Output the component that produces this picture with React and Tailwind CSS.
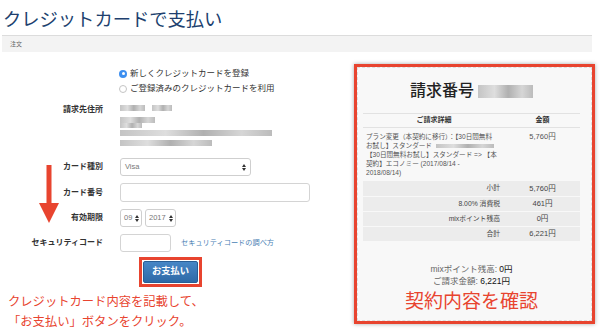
import React from "react";

function UpDown() {
  return (
    <svg width="4" height="7" viewBox="0 0 4 7" className="shrink-0">
      <polygon points="0,3 4,3 2,0" fill="#333" />
      <polygon points="0,4 4,4 2,7" fill="#333" />
    </svg>
  );
}

function Row({ label, children, className = "" }) {
  return (
    <div className={"flex items-center " + className}>
      <div className="w-[103px] shrink-0 text-right text-[8px] font-bold text-[#333]">
        {label}
      </div>
      <div className="ml-[17px] flex items-center">{children}</div>
    </div>
  );
}

function Mosaic({ className = "" }) {
  return (
    <div
      className={
        "bg-[linear-gradient(90deg,#c4c4c4,#dedede_30%,#b0b0b0_55%,#d6d6d6_80%,#bcbcbc)] blur-[0.6px] " +
        className
      }
    />
  );
}

const summary = [
  ["小計", "5,760円"],
  ["8.00% 消費税", "461円"],
  ["mixポイント残高", "0円"],
  ["合計", "6,221円"],
];

export default function App() {
  return (
    <div className="w-[600px] h-[330px] overflow-hidden bg-white text-[#333] font-['Liberation_Sans','Noto_Sans_CJK_JP',sans-serif]">
      {/* title */}
      <h1 className="h-[35px] pl-[3px] pt-[7px] text-[18.3px] leading-[26px] text-[#203f6e]">
        クレジットカードで支払い
      </h1>
      {/* breadcrumb */}
      <div className="mx-[2px] h-[17px] w-[590px] border-t border-[#dcdcdc] bg-[#f3f3f3] pl-[8px] text-[6px] leading-[16px] text-[#666]">
        注文
      </div>

      <div className="flex">
        {/* LEFT: form */}
        <div className="relative w-[354px] shrink-0 pt-[14px]">
          <div className="flex h-[15px] items-center pl-[119px] text-[8.5px]">
            <span className="flex h-[8px] w-[8px] items-center justify-center rounded-full bg-[#3d8ff0]">
              <span className="h-[3px] w-[3px] rounded-full bg-white" />
            </span>
            <span className="ml-[3px]">新しくクレジットカードを登録</span>
          </div>
          <div className="flex h-[15px] items-center pl-[119px] text-[8.5px]">
            <span className="h-[8px] w-[8px] rounded-full border border-[#c4c4c4] bg-white" />
            <span className="ml-[3px]">ご登録済みのクレジットカードを利用</span>
          </div>

          <div className="mt-[8px] flex items-start">
            <div className="w-[103px] shrink-0 text-right text-[8px] font-bold leading-[12px] text-[#333]">
              請求先住所
            </div>
            <div className="ml-[17px] flex h-[46px] flex-col pt-[1px]">
              <div className="flex gap-[7px]">
                <Mosaic className="h-[6px] w-[25px]" />
                <Mosaic className="h-[6px] w-[20px]" />
              </div>
              <Mosaic className="mt-[6px] h-[6px] w-[35px]" />
              <Mosaic className="h-[5px] w-[22px]" />
              <Mosaic className="mt-[2px] h-[6px] w-[152px]" />
              <Mosaic className="mt-[4px] h-[6px] w-[92px]" />
            </div>
          </div>

          <Row label="カード種別" className="mt-[8px]">
            <div className="flex h-[18px] w-[131px] items-center justify-between rounded-[3px] border border-[#cfcfcf] bg-white px-[4px] text-[7.5px] text-[#777]">
              <span>Visa</span>
              <UpDown />
            </div>
          </Row>

          <Row label="カード番号" className="mt-[7px]">
            <div className="h-[19px] w-[190px] rounded-[3px] border border-[#d4d4d4] bg-white" />
          </Row>

          <Row label="有効期限" className="mt-[7px]">
            <div className="flex gap-[3px] text-[7.5px] text-[#777]">
              <div className="flex h-[18px] w-[22px] items-center justify-between rounded-[3px] border border-[#cfcfcf] bg-white pl-[3px] pr-[2px]">
                <span>09</span>
                <UpDown />
              </div>
              <div className="flex h-[18px] w-[31px] items-center justify-between rounded-[3px] border border-[#cfcfcf] bg-white pl-[3px] pr-[2px]">
                <span>2017</span>
                <UpDown />
              </div>
            </div>
          </Row>

          <Row label="セキュリティコード" className="mt-[7px]">
            <div className="h-[18px] w-[51px] rounded-[3px] border border-[#d4d4d4] bg-white" />
            <span className="ml-[10px] text-[7.2px] text-[#4a7fb5]">
              セキュリティコードの調べ方
            </span>
          </Row>

          {/* pay button with red frame */}
          <div className="ml-[139px] mt-[5px] w-fit border-[3px] border-[#e8442f] p-[1px]">
            <button className="flex h-[22px] w-[55px] items-center justify-center rounded-[2px] border border-[#285e96] bg-[linear-gradient(#4686c6,#2f6aa7)] text-[9.3px] font-bold text-white">
              お支払い
            </button>
          </div>

          <p className="mt-[5px] pl-[8px] text-[12.3px] leading-[20px] text-[#e8442f]">
            クレジットカード内容を記載して、
            <br />
            「お支払い」ボタンをクリック。
          </p>

          {/* annotation arrow */}
          <svg
            width="20"
            height="60"
            viewBox="0 0 20 60"
            className="absolute left-[39px] top-[113px]"
          >
            <rect x="7.5" y="0" width="5" height="39" fill="#e8442f" />
            <polygon points="0,38 20,38 10,58" fill="#e8442f" />
          </svg>
        </div>

        {/* RIGHT: invoice */}
        <div className="mt-[12px] h-[260px] w-[241px] shrink-0 border-[3px] border-[#e8442f] shadow-[0_0_4px_rgba(0,0,0,0.35)]">
          <div className="h-full border border-dashed border-[#dedede] bg-[#f8f8f8]">
            <div className="ml-[5px] w-[217px]">
              <div className="flex items-center justify-center gap-[4px] pt-[13px] text-[16px] font-medium leading-[20px] text-[#222]">
                <span>請求番号</span>
                <Mosaic className="h-[13px] w-[55px]" />
              </div>

              <div className="mt-[12px] flex h-[15px] items-center border-y border-[#e2e2e2] text-[7px] font-bold">
                <div className="w-[142px] text-center">ご請求詳細</div>
                <div className="flex-1 text-center">金額</div>
              </div>

              <div className="flex h-[53px] pt-[4px] text-[6.6px] leading-[9px] text-[#555]">
                <div className="w-[142px] pl-[3px]">
                  プラン変更（本契約に移行）：【30日間無料
                  <br />
                  <span className="inline-flex items-center">
                    お試し】スタンダード
                    <Mosaic className="ml-[4px] h-[4px] w-[58px]" />
                  </span>
                  <br />
                  【30日間無料お試し】スタンダード =&gt; 【本
                  <br />
                  契約】エコノミー (2017/08/14 -
                  <br />
                  2018/08/14)
                </div>
                <div className="flex-1 text-center text-[7.5px]">5,760円</div>
              </div>

              {summary.map(([label, value], i) => (
                <div
                  key={label}
                  className={
                    "flex h-[15px] items-center bg-[#ececec] text-[#444] " +
                    (i > 0 ? "border-t border-[#f8f8f8]" : "")
                  }
                >
                  <div className="w-[142px] pr-[5px] text-right text-[6.8px]">
                    {label}
                  </div>
                  <div className="flex-1 text-center text-[7.5px]">{value}</div>
                </div>
              ))}

              <div className="mt-[22px] text-center text-[8.5px] leading-[12px] text-[#666]">
                <div>
                  mixポイント残高: <span className="text-[#111]">0円</span>
                </div>
                <div>
                  ご請求金額: <span className="text-[#111]">6,221円</span>
                </div>
              </div>

              <div className="mt-[4px] text-center text-[19px] leading-[22px] text-[#e8442f]">
                契約内容を確認
              </div>
            </div>
          </div>
        </div>
      </div>
    </div>
  );
}
